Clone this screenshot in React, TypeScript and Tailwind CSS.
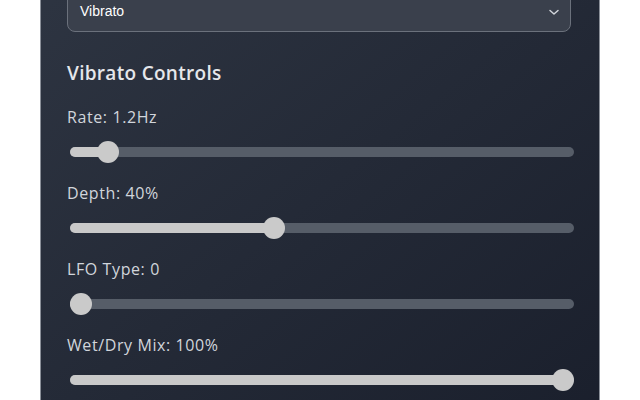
const sliders = [
  { label: "Rate: 1.2Hz", value: 0.055 },
  { label: "Depth: 40%", value: 0.4 },
  { label: "LFO Type: 0", value: 0 },
  { label: "Wet/Dry Mix: 100%", value: 1 },
];

function Slider({ label, value }: { label: string; value: number }) {
  // thumb is 22px, so its centre travels from 11px to (width - 11px)
  const pos = `calc(11px + (100% - 22px) * ${value})`;
  return (
    <div className="flex flex-col gap-[14px]">
      <div className="text-[16px] leading-[20px] tracking-[0.6px] text-[#d1d5db]">{label}</div>
      <div className="relative ml-[3px] h-[22px]">
        <div className="absolute inset-x-0 top-[6px] h-[10px] rounded-full bg-[#565d68]" />
        <div className="absolute left-0 top-[6px] h-[10px] rounded-full bg-[#c9c9c9]" style={{ width: pos }} />
        <div
          className="absolute top-0 h-[22px] w-[22px] -translate-x-1/2 rounded-full bg-[#cacaca]"
          style={{ left: pos }}
        />
      </div>
    </div>
  );
}

export default function App() {
  return (
    <div className="h-[400px] w-[640px] overflow-hidden bg-white" style={{ fontFamily: "'Open Sans', 'Noto Sans', sans-serif" }}>
      <div className="mx-[40px] -mt-[34px] border border-[#8b9099] bg-gradient-to-br from-[#2e3542] to-[#1a1f2c] pb-[40px] pl-[26px] pr-[25px] pt-[24px]">
        <div className="mr-[3px] flex h-[41px] items-center justify-between rounded-[8px] border border-[#6b717c] bg-[#3a404c] pl-[12px] pr-[10px]">
          <span className="text-[14px] text-white" style={{ fontFamily: "'Liberation Sans', Arial, sans-serif" }}>
            Vibrato
          </span>
          <svg width="12" height="12" viewBox="0 0 12 12" fill="none" stroke="#d1d5db" strokeWidth="1.5" strokeLinecap="round" strokeLinejoin="round">
            <path d="M2 4.5l4 3.5 4-3.5" />
          </svg>
        </div>
        <h3 className="mt-[27px] text-[19px] font-semibold leading-[28px] tracking-[0.3px] text-[#e5e7eb]">Vibrato Controls</h3>
        <div className="mt-[20px] flex flex-col gap-[20px]">
          {sliders.map((s) => (
            <Slider key={s.label} label={s.label} value={s.value} />
          ))}
        </div>
      </div>
    </div>
  );
}
